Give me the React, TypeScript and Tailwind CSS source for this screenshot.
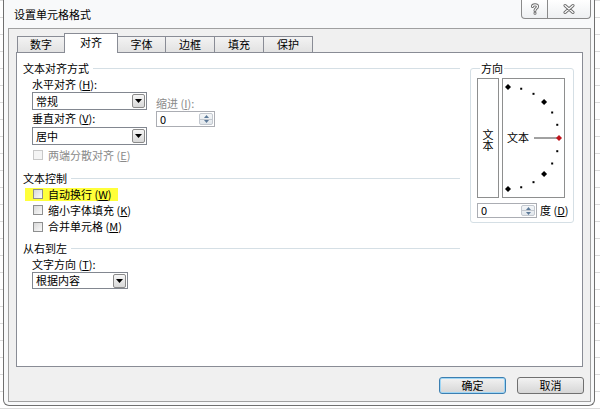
import React from "react";

function U({ c }: { c: string }) {
  return <span className="underline underline-offset-1">{c}</span>;
}

function DropArrow() {
  return (
    <span className="w-[13px] h-[14px] mr-[1px] flex items-center justify-center border border-[#8a8a8a] rounded-[2px] bg-gradient-to-b from-[#f6f6f6] to-[#d8d8d8]">
      <svg width="7" height="4" viewBox="0 0 7 4">
        <path d="M0 0 L7 0 L3.5 4 Z" fill="#000" />
      </svg>
    </span>
  );
}

function Select({ value, wide }: { value: string; wide?: boolean }) {
  return (
    <div
      className={
        wide
          ? "w-[115px] h-[18px] flex items-center border border-[#828790] bg-white"
          : "w-[96px] h-[17px] flex items-center border border-[#828790] bg-white"
      }
    >
      <span className="flex-1 pl-[3px] text-[11px] leading-none">{value}</span>
      <DropArrow />
    </div>
  );
}

function SpinButtons() {
  return (
    <div className="w-[14px] my-[1px] mr-[1px] flex flex-col border border-[#c3c8cf] rounded-[2px] bg-gradient-to-b from-[#f4f6f8] to-[#e2e7ec]">
      <span className="flex-1 flex items-center justify-center border-b border-[#c3c8cf]">
        <svg width="5" height="3" viewBox="0 0 5 3">
          <path d="M0 3 L5 3 L2.5 0 Z" fill="#5d7a99" />
        </svg>
      </span>
      <span className="flex-1 flex items-center justify-center">
        <svg width="5" height="3" viewBox="0 0 5 3">
          <path d="M0 0 L5 0 L2.5 3 Z" fill="#5d7a99" />
        </svg>
      </span>
    </div>
  );
}

function Checkbox({ label, disabled }: { label: React.ReactNode; disabled?: boolean }) {
  return (
    <span className="flex items-center gap-[5px]">
      <span
        className={
          disabled
            ? "w-[10px] h-[10px] border border-[#c8c8c8] bg-[#f4f4f4]"
            : "w-[10px] h-[10px] border border-[#8e8f8f] bg-gradient-to-br from-[#d8d8d8] to-[#fafafa]"
        }
      />
      <span className={disabled ? "text-[11px] leading-none text-[#8a8a8a]" : "text-[11px] leading-none"}>
        {label}
      </span>
    </span>
  );
}

function GroupHeader({ title }: { title: string }) {
  return (
    <div className="h-[16px] flex items-center">
      <span className="text-[11px] leading-none">{title}</span>
      <div className="flex-1 h-px bg-[#d5dfe5] ml-[4px]" />
    </div>
  );
}

function Dial() {
  const cx = 5;
  const cy = 59;
  const r = 51;
  const angles = [90, 75, 60, 45, 30, 15, 0, -15, -30, -45, -60, -75, -90];
  return (
    <svg width="61" height="118" viewBox="0 0 61 118">
      <line x1="31" y1={cy} x2="54" y2={cy} stroke="#444" strokeWidth="1" />
      <text x="4" y={cy + 4} fontSize="11" fontFamily="'Noto Sans CJK SC', sans-serif" fill="#000">
        文本
      </text>
      {angles.map((a) => {
        const x = cx + r * Math.cos((a * Math.PI) / 180);
        const y = cy - r * Math.sin((a * Math.PI) / 180);
        if (a === 0) {
          return <path key={a} d={`M${x} ${y - 3} L${x + 3} ${y} L${x} ${y + 3} L${x - 3} ${y} Z`} fill="#c0141c" />;
        }
        if (Math.abs(a) === 90 || Math.abs(a) === 45) {
          return <path key={a} d={`M${x} ${y - 3} L${x + 3} ${y} L${x} ${y + 3} L${x - 3} ${y} Z`} fill="#000" />;
        }
        return <rect key={a} x={x - 1} y={y - 1} width="2" height="2" fill="#000" />;
      })}
    </svg>
  );
}

function CaptionGlyph({ d }: { d: string }) {
  return (
    <svg width="12" height="12" viewBox="0 0 12 12">
      <path d={d} fill="none" stroke="#6b6b6b" strokeWidth="3" strokeLinecap="round" strokeLinejoin="round" />
      <path d={d} fill="none" stroke="#fff" strokeWidth="1.2" strokeLinecap="round" strokeLinejoin="round" />
    </svg>
  );
}

export default function App() {
  return (
    <div className="w-[600px] h-[410px] overflow-hidden bg-white bg-[linear-gradient(#dadada_1px,transparent_1px)] bg-[size:100%_17px] font-['Noto_Sans_CJK_SC','Microsoft_YaHei',sans-serif] text-black">
      <div className="ml-[3px] w-[592px] flex flex-col border-x border-b border-[#6f6f6f] rounded-b-[6px] bg-[#f8f9fa] pl-[4px] pr-[3px] pb-[3px]">
        {/* Title bar */}
        <div className="h-[28px] flex items-start justify-between">
          <span className="ml-[6px] mt-[9px] text-[11px] leading-none">设置单元格格式</span>
          <div className="flex h-[19px] border-x border-b border-[#8a8a8a] rounded-b-[4px] bg-gradient-to-b from-[#ffffff] to-[#eef0f2]">
            <span className="w-[25px] flex items-center justify-center">
              <CaptionGlyph d="M3.5 3.5 C3.5 1.2 8.5 1.2 8.5 3.5 C8.5 5.5 6 5.3 6 7.5 M6 10 L6 10.3" />
            </span>
            <span className="w-[43px] flex items-center justify-center border-l border-[#8a8a8a]">
              <CaptionGlyph d="M2 2.5 L10 9.5 M10 2.5 L2 9.5" />
            </span>
          </div>
        </div>

        {/* Client frame */}
        <div className="flex flex-col border border-[#a0a0a0] bg-[#f0f0f0] px-[7px] pt-[4px] pb-[7px]">
          {/* Tabs */}
          <div className="h-[19px] flex items-end pl-[1px]">
            <div className="w-[47px] h-[16px] flex items-center justify-center border-l border-t border-[#898c95] bg-gradient-to-b from-[#f3f3f3] to-[#e2e2e2] text-[11px] leading-none">
              数字
            </div>
            <div className="relative z-10 -mb-px w-[54px] h-[20px] flex items-center justify-center pb-[2px] border-x border-t border-[#898c95] bg-white text-[11px] leading-none">
              对齐
            </div>
            {["字体", "边框", "填充", "保护"].map((t, i) => (
              <div
                key={t}
                className={
                  i === 0
                    ? "w-[48px] h-[16px] flex items-center justify-center border-r border-t border-[#898c95] bg-gradient-to-b from-[#f3f3f3] to-[#e2e2e2] text-[11px] leading-none"
                    : "w-[49px] h-[16px] flex items-center justify-center border-r border-t border-[#898c95] bg-gradient-to-b from-[#f3f3f3] to-[#e2e2e2] text-[11px] leading-none"
                }
              >
                {t}
              </div>
            ))}
          </div>

          {/* Panel */}
          <div className="h-[315px] flex border border-[#898c95] bg-white pt-[7px] pl-[6px]">
            {/* Left column */}
            <div className="w-[437px] flex flex-col">
              <GroupHeader title="文本对齐方式" />
              <div className="flex pl-[9px]">
                <div className="w-[124px] flex flex-col">
                  <div className="h-[16px] flex items-center text-[11px] leading-none">
                    水平对齐 (<U c="H" />):
                  </div>
                  <Select value="常规" wide />
                  <div className="h-[17px] flex items-center text-[11px] leading-none">
                    垂直对齐 (<U c="V" />):
                  </div>
                  <Select value="居中" wide />
                </div>
                <div className="flex flex-col pt-[19px]">
                  <div className="h-[16px] flex items-center text-[11px] leading-none text-[#8a8a8a]">
                    缩进 (<U c="I" />):
                  </div>
                  <div className="w-[59px] h-[16px] flex border border-[#abadb3] bg-white">
                    <span className="flex-1 flex items-center pl-[3px] text-[11px] leading-none">0</span>
                    <SpinButtons />
                  </div>
                </div>
              </div>
              <div className="h-[16px] mt-[2px] flex items-center pl-[10px]">
                <Checkbox disabled label={<>两端分散对齐 (<U c="E" />)</>} />
              </div>

              <div className="mt-[7px]">
                <GroupHeader title="文本控制" />
              </div>
              <div className="h-[16px] flex items-center pl-[2px]">
                <span className="w-[93px] h-[13px] flex items-center pl-[8px] bg-[#ffff3a]">
                  <Checkbox label={<>自动换行 (<U c="W" />)</>} />
                </span>
              </div>
              <div className="h-[16px] flex items-center pl-[10px]">
                <Checkbox label={<>缩小字体填充 (<U c="K" />)</>} />
              </div>
              <div className="h-[17px] flex items-center pl-[10px]">
                <Checkbox label={<>合并单元格 (<U c="M" />)</>} />
              </div>

              <div className="mt-[5px]">
                <GroupHeader title="从右到左" />
              </div>
              <div className="h-[16px] flex items-center pl-[9px] text-[11px] leading-none">
                文字方向 (<U c="T" />):
              </div>
              <div className="pl-[9px]">
                <Select value="根据内容" />
              </div>
            </div>

            {/* Orientation group */}
            <fieldset className="ml-[10px] w-[104px] h-[163px] border border-[#d5dfe5] rounded-[3px] pl-[6px] pt-[2px]">
              <legend className="ml-[3px] px-[1px] text-[11px] leading-[16px]">方向</legend>
              <div className="flex gap-[3px]">
                <div className="w-[22px] h-[120px] flex items-center justify-center border border-[#8e8f8f] pt-[4px]">
                  <span className="[writing-mode:vertical-rl] text-[11px] leading-[12px] tracking-[0px]">文本</span>
                </div>
                <div className="w-[63px] h-[120px] border border-[#8e8f8f]">
                  <Dial />
                </div>
              </div>
              <div className="mt-[5px] flex items-center gap-[3px]">
                <div className="w-[60px] h-[15px] flex border border-[#abadb3] bg-white">
                  <span className="flex-1 flex items-center pl-[3px] text-[11px] leading-none">0</span>
                  <SpinButtons />
                </div>
                <span className="text-[11px] leading-none">
                  度 (<U c="D" />)
                </span>
              </div>
            </fieldset>
          </div>

          {/* Buttons */}
          <div className="mt-[10px] flex justify-end gap-[11px] -mr-px">
            <button className="w-[67px] h-[17px] flex items-center justify-center border border-[#3c7fb1] rounded-[3px] shadow-[inset_0_0_0_1px_#9fd6f5] bg-gradient-to-b from-[#f2f2f2] to-[#d6d6d6] text-[11px] leading-none">
              确定
            </button>
            <button className="w-[67px] h-[17px] flex items-center justify-center border border-[#707070] rounded-[3px] bg-gradient-to-b from-[#f2f2f2] to-[#d6d6d6] text-[11px] leading-none">
              取消
            </button>
          </div>
        </div>
      </div>
    </div>
  );
}
